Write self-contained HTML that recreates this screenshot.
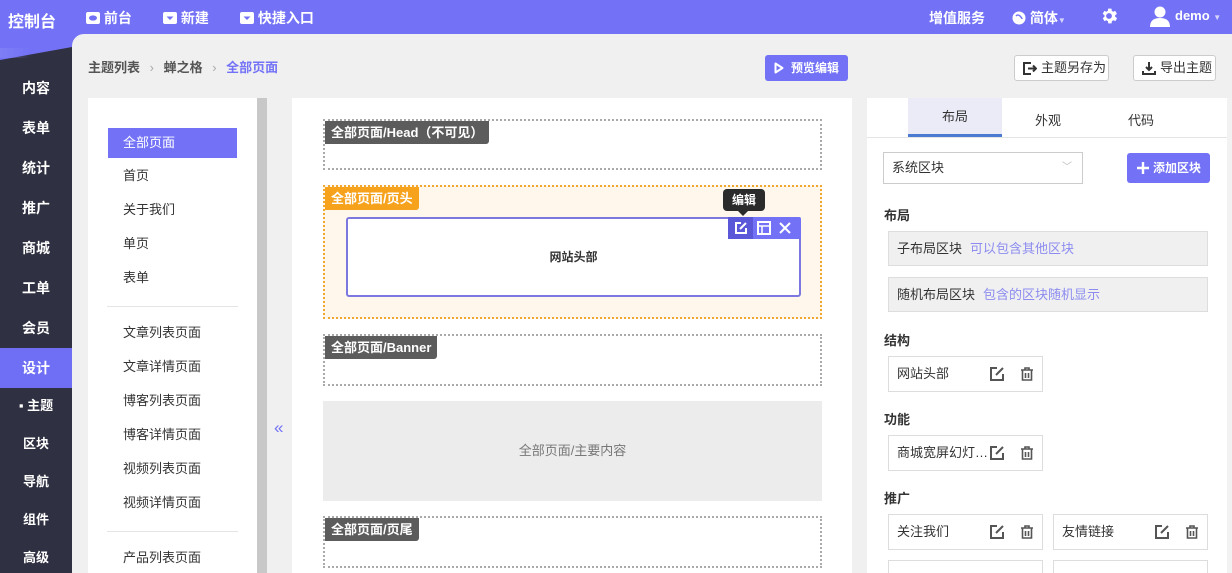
<!DOCTYPE html>
<html><head><meta charset="utf-8"><style>
*{box-sizing:border-box;margin:0;padding:0}
html,body{width:1232px;height:573px;overflow:hidden}
body{position:relative;background:#7372f6;font-family:"Liberation Sans","Noto Sans CJK SC",sans-serif;font-size:13px;color:#333}
.a{position:absolute}
.top{left:0;top:0;width:1232px;height:34px;background:#7372f6;color:#fff;font-weight:bold;font-size:14px}
.top span{position:absolute;top:8px;white-space:nowrap}
.side{left:0;top:0;width:72px;height:573px;background:#2f3041;clip-path:polygon(0 60px,72px 47px,72px 573px,0 573px)}
.sitem{position:absolute;left:0;width:72px;height:40px;line-height:40px;text-align:center;color:#fff;font-size:14px;font-weight:bold}
.main{left:72px;top:34px;width:1160px;height:539px;background:#f0f0f0;border-top-left-radius:12px}
.btn{position:absolute;height:26px;border:1px solid #ccc;border-radius:3px;background:#fff;font-size:13px;line-height:24px;padding-left:26px;color:#333}
.lp{left:88px;top:98px;width:169px;height:475px;background:#fff}
.li{position:absolute;left:20px;width:129px;height:30px;line-height:30px;padding-left:15px;font-size:13px;color:#333}
.blk{position:absolute;left:323px;width:499px;border:2px dotted #aaa}
.tag{position:absolute;left:0;top:0;background:#5c5c5c;color:#fff;font-size:13px;font-weight:bold;padding:0 6px;height:23px;line-height:23px;border-bottom-right-radius:3px}
.rp{left:867px;top:98px;width:365px;height:475px;background:#fff}
.h{position:absolute;left:884px;font-weight:bold;font-size:13px;color:#333}
.row{position:absolute;left:888px;width:320px;height:35px;border:1px solid #ddd;background:#f0f0f0;line-height:33px;padding-left:8px;font-size:13px}
.row i{font-style:normal;color:#8c8cf0;margin-left:8px}
.card{position:absolute;width:155px;height:36px;border:1px solid #ddd;background:#fff;line-height:34px;padding-left:8px;font-size:13px}
.card svg{position:absolute;top:9px}
</style></head><body>
<div class="a top">
<span style="left:8px;font-size:16px">控制台</span>
<span style="left:86px"><svg width="14" height="12" style="vertical-align:-1px"><rect x="0" y="0" width="14" height="12" rx="2" fill="#fff"/><ellipse cx="7" cy="6" rx="4" ry="2.6" fill="#7372f6"/></svg> 前台</span>
<span style="left:163px"><svg width="14" height="12" style="vertical-align:-1px"><rect width="14" height="12" rx="2" fill="#fff"/><path d="M3.5 4.5L7 8 10.5 4.5z" fill="#7372f6"/></svg> 新建</span>
<span style="left:240px"><svg width="14" height="12" style="vertical-align:-1px"><rect width="14" height="12" rx="2" fill="#fff"/><path d="M3.5 4.5L7 8 10.5 4.5z" fill="#7372f6"/></svg> 快捷入口</span>
<span style="left:929px">增值服务</span>
<span style="left:1012px"><svg width="14" height="14" style="vertical-align:-2px"><circle cx="7" cy="7" r="6.5" fill="#fff"/><path d="M4 5q2-2 4 0t2 3" stroke="#7372f6" stroke-width="1.5" fill="none"/></svg> 简体<small style="font-size:8px;opacity:.7">▼</small></span>
<span style="left:1099px;top:6px"><svg width="20" height="20" viewBox="0 0 24 24"><path fill="#fff" d="M19.4 13a7.5 7.5 0 000-2l2.1-1.6-2-3.5-2.5 1a7.4 7.4 0 00-1.7-1L15 3.2h-4l-.4 2.7a7.4 7.4 0 00-1.7 1l-2.5-1-2 3.5L6.6 11a7.5 7.5 0 000 2l-2.1 1.6 2 3.5 2.5-1a7.4 7.4 0 001.7 1l.4 2.7h4l.4-2.7a7.4 7.4 0 001.7-1l2.5 1 2-3.5zM12 15.5a3.5 3.5 0 110-7 3.5 3.5 0 010 7z"/></svg></span>
<span style="left:1150px;top:5px"><svg width="20" height="22"><circle cx="10" cy="7" r="5.5" fill="#fff"/><path d="M0 22q0-9 10-9t10 9z" fill="#fff"/></svg></span>
<span style="left:1175px;font-size:13px">demo <small style="font-size:8px;opacity:.7">▼</small></span>
</div>
<div class="a side"></div>
<div class="a" style="left:0;top:48px;width:30px;height:10px;background:linear-gradient(90deg,#8a8af8,transparent);opacity:.5"></div>
<div class="a" style="left:0;top:348px;width:72px;height:40px;background:#6f6ff5"></div>
<div class="sitem" style="top:68px">内容</div><div class="sitem" style="top:108px">表单</div><div class="sitem" style="top:148px">统计</div><div class="sitem" style="top:188px">推广</div><div class="sitem" style="top:228px">商城</div><div class="sitem" style="top:268px">工单</div><div class="sitem" style="top:308px">会员</div><div class="sitem" style="top:348px">设计</div>
<div class="sitem" style="top:386px;font-size:13px">▪ 主题</div><div class="sitem" style="top:424px;font-size:13px">区块</div><div class="sitem" style="top:462px;font-size:13px">导航</div><div class="sitem" style="top:500px;font-size:13px">组件</div><div class="sitem" style="top:538px;font-size:13px">高级</div>
<div class="a main"></div>
<div class="a" style="left:88px;top:57px;font-size:13px;font-weight:bold;color:#555">主题列表 <span style="color:#aaa;font-weight:normal;margin:0 6px">›</span> 蝉之格 <span style="color:#aaa;font-weight:normal;margin:0 6px">›</span> <span style="color:#7372f6">全部页面</span></div>
<div class="a" style="left:765px;top:55px;width:83px;height:26px;background:#7372f6;border-radius:3px;color:#fff;font-size:12px;font-weight:bold;line-height:26px;padding-left:26px"><svg class="a" style="left:9px;top:7px" width="10" height="12"><path d="M1.5 1.5L8.5 6 1.5 10.5z" stroke="#fff" stroke-width="2" fill="none" stroke-linejoin="round"/></svg>预览编辑</div>
<div class="btn" style="left:1014px;top:55px;width:95px"><svg class="a" style="left:8px;top:6px" width="14" height="13"><path d="M8 1H1v11h7M5 6.5h8M10 3.5l3 3-3 3" stroke="#333" stroke-width="2" fill="none"/></svg>主题另存为</div>
<div class="btn" style="left:1133px;top:55px;width:83px"><svg class="a" style="left:8px;top:5px" width="14" height="14"><path d="M7 1v8M4 6l3 3 3-3M1 10v3h12v-3" stroke="#333" stroke-width="2" fill="none"/></svg>导出主题</div>
<div class="a lp"></div>
<div class="a" style="left:257px;top:98px;width:10px;height:475px;background:#c8c8c8"></div>
<div class="a" style="left:274px;top:418px;color:#7372f6;font-size:17px">«</div>
<div class="li" style="left:108px;top:128px;background:#7372f6;color:#fff">全部页面</div>
<div class="li" style="left:108px;top:161px">首页</div><div class="li" style="left:108px;top:195px">关于我们</div><div class="li" style="left:108px;top:229px">单页</div><div class="li" style="left:108px;top:263px">表单</div>
<div class="a" style="left:107px;top:306px;width:131px;height:1px;background:#e5e5e5"></div>
<div class="li" style="left:108px;top:318px">文章列表页面</div><div class="li" style="left:108px;top:352px">文章详情页面</div><div class="li" style="left:108px;top:386px">博客列表页面</div><div class="li" style="left:108px;top:420px">博客详情页面</div><div class="li" style="left:108px;top:454px">视频列表页面</div><div class="li" style="left:108px;top:488px">视频详情页面</div>
<div class="a" style="left:107px;top:531px;width:131px;height:1px;background:#e5e5e5"></div>
<div class="li" style="left:108px;top:543px">产品列表页面</div>
<div class="a" style="left:292px;top:98px;width:560px;height:475px;background:#fff"></div>
<div class="blk" style="top:119px;height:51px"><div class="tag">全部页面/Head（不可见）</div></div>
<div class="blk" style="top:185px;height:134px;border-color:#f0a830;background:#fff7ec"><div class="tag" style="background:#f7a21c">全部页面/页头</div>
<div class="a" style="left:21px;top:30px;width:455px;height:80px;border:2px solid #7c78e0;border-radius:3px;background:#fff;text-align:center;line-height:76px;font-weight:bold;font-size:12px">网站头部</div>
<div class="a" style="left:403px;top:30px;width:73px;height:22px;background:#7372f6;border-top-right-radius:2px"><div class="a" style="left:0;top:0;width:25px;height:22px;background:#5a58d8"></div>
<svg class="a" style="left:6px;top:4px" width="14" height="14"><path d="M7 2H2v10h10V7M6 8l6-6" stroke="#fff" stroke-width="2" fill="none"/></svg>
<svg class="a" style="left:29px;top:4px" width="14" height="14"><rect x="1" y="1" width="12" height="12" stroke="#fff" stroke-width="2" fill="none"/><path d="M1 5h12M5 5v8" stroke="#fff" stroke-width="1.5"/></svg>
<svg class="a" style="left:51px;top:5px" width="12" height="12"><path d="M1 1l10 10M11 1L1 11" stroke="#fff" stroke-width="2"/></svg></div>
<div class="a" style="left:398px;top:2px;width:42px;height:22px;background:#2b2b2b;border-radius:4px;color:#fff;font-size:12px;font-weight:bold;text-align:center;line-height:22px">编辑</div>
<div class="a" style="left:413px;top:24px;border:5px solid transparent;border-top-color:#2b2b2b"></div>
</div>
<div class="blk" style="top:334px;height:52px"><div class="tag">全部页面/Banner</div></div>
<div class="a" style="left:323px;top:401px;width:499px;height:100px;background:#ececec;text-align:center;line-height:100px;color:#777;font-size:13px">全部页面/主要内容</div>
<div class="blk" style="top:516px;height:52px"><div class="tag">全部页面/页尾</div></div>
<div class="a rp"></div>
<div class="a" style="left:908px;top:98px;width:94px;height:39px;background:#ebebf7;border-bottom:3px solid #4a7bd0;text-align:center;line-height:38px;font-size:13px">布局</div>
<div class="a" style="left:1035px;top:110px;font-size:13px">外观</div>
<div class="a" style="left:1128px;top:110px;font-size:13px">代码</div>
<div class="a" style="left:867px;top:137px;width:360px;height:1px;background:#e5e5e5"></div>
<div class="a" style="left:1227px;top:98px;width:5px;height:475px;background:#f2f2f2"></div>
<div class="a" style="left:883px;top:152px;width:200px;height:32px;border:1px solid #ccc;line-height:30px;padding-left:8px;font-size:13px">系统区块<span class="a" style="right:10px;top:0;color:#bbb;font-size:10px">﹀</span></div>
<div class="a" style="left:1127px;top:153px;width:83px;height:30px;background:#7372f6;border-radius:3px;color:#fff;font-weight:bold;font-size:12px;line-height:30px;padding-left:26px"><svg class="a" style="left:9px;top:8px" width="14" height="14"><path d="M7 1v12M1 7h12" stroke="#fff" stroke-width="2.4"/></svg>添加区块</div>
<div class="h" style="top:205px">布局</div>
<div class="row" style="top:231px">子布局区块<i>可以包含其他区块</i></div>
<div class="row" style="top:277px">随机布局区块<i>包含的区块随机显示</i></div>
<div class="h" style="top:330px">结构</div>
<div class="h" style="top:409px">功能</div>
<div class="h" style="top:488px">推广</div>
<div class="card" style="left:888px;top:356px">网站头部<svg style="left:100px" width="16" height="16"><path d="M8 2H2v12h12V8M7 9l7-7" stroke="#555" stroke-width="2" fill="none"/></svg><svg style="left:130px" width="16" height="16"><path d="M2 4h12M6 4V2h4v2M3.5 4v10h9V4M6.5 7v5M9.5 7v5" stroke="#555" stroke-width="1.6" fill="none"/></svg></div>
<div class="card" style="left:888px;top:435px">商城宽屏幻灯…<svg style="left:100px" width="16" height="16"><path d="M8 2H2v12h12V8M7 9l7-7" stroke="#555" stroke-width="2" fill="none"/></svg><svg style="left:130px" width="16" height="16"><path d="M2 4h12M6 4V2h4v2M3.5 4v10h9V4M6.5 7v5M9.5 7v5" stroke="#555" stroke-width="1.6" fill="none"/></svg></div>
<div class="card" style="left:888px;top:514px">关注我们<svg style="left:100px" width="16" height="16"><path d="M8 2H2v12h12V8M7 9l7-7" stroke="#555" stroke-width="2" fill="none"/></svg><svg style="left:130px" width="16" height="16"><path d="M2 4h12M6 4V2h4v2M3.5 4v10h9V4M6.5 7v5M9.5 7v5" stroke="#555" stroke-width="1.6" fill="none"/></svg></div>
<div class="card" style="left:1053px;top:514px">友情链接<svg style="left:100px" width="16" height="16"><path d="M8 2H2v12h12V8M7 9l7-7" stroke="#555" stroke-width="2" fill="none"/></svg><svg style="left:130px" width="16" height="16"><path d="M2 4h12M6 4V2h4v2M3.5 4v10h9V4M6.5 7v5M9.5 7v5" stroke="#555" stroke-width="1.6" fill="none"/></svg></div>
<div class="card" style="left:888px;top:560px;height:13px;border-bottom:none"></div>
<div class="card" style="left:1053px;top:560px;height:13px;border-bottom:none"></div>
</body></html>
